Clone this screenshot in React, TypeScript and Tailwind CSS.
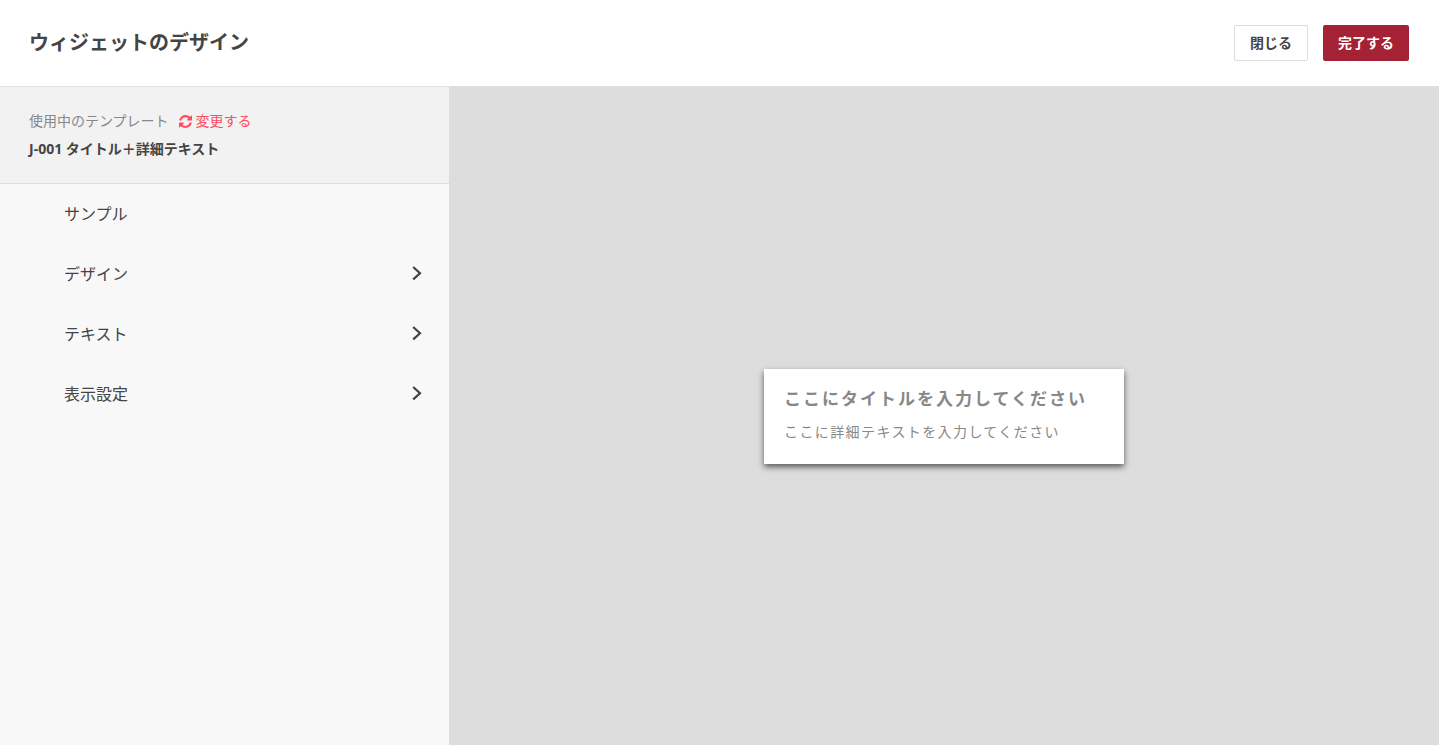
const menuItems = [
  { label: "サンプル", hasChildren: false },
  { label: "デザイン", hasChildren: true },
  { label: "テキスト", hasChildren: true },
  { label: "表示設定", hasChildren: true },
]

function RefreshIcon() {
  return (
    <svg width="13" height="13" viewBox="128 128 1536 1536" fill="currentColor" aria-hidden="true">
      <path d="M1639 1056q0 5-1 7-64 268-268 434.5t-478 166.5q-146 0-282.5-55t-243.5-157l-129 129q-19 19-45 19t-45-19-19-45v-448q0-26 19-45t45-19h448q26 0 45 19t19 45-19 45l-137 137q71 66 161 102t187 36q134 0 250-65t186-179q11-17 53-117 8-23 30-23h192q13 0 22.5 9.5t9.5 22.5zm25-800v448q0 26-19 45t-45 19h-448q-26 0-45-19t-19-45 19-45l138-138q-148-137-349-137-134 0-250 65t-186 179q-11 17-53 117-8 23-30 23h-199q-13 0-22.5-9.5t-9.5-22.5v-7q65-268 270-434.5t480-166.5q146 0 284 55.5t245 156.5l130-129q19-19 45-19t45 19 19 45z" />
    </svg>
  )
}

function Chevron() {
  return (
    <svg width="10" height="16" viewBox="0 0 10 16" fill="none" stroke="currentColor" strokeWidth="2.2" aria-hidden="true">
      <path d="M1.2 1L8 7.2L1.2 13.4" />
    </svg>
  )
}

function Header() {
  return (
    <header className="flex h-[87px] shrink-0 items-center justify-between border-b border-[#e0e0e0] bg-white px-[29px]">
      <h1 className="text-xl font-bold">ウィジェットのデザイン</h1>
      <div className="flex items-center gap-[15px] pr-px">
        <button className="h-9 rounded-[2px] border border-[#dddddd] bg-white px-[15px] text-sm font-bold">
          閉じる
        </button>
        <button className="h-9 rounded-[2px] bg-[#a52134] px-[15px] text-sm font-bold text-white">完了する</button>
      </div>
    </header>
  )
}

function Sidebar() {
  return (
    <aside className="w-[449px] shrink-0 bg-[#f8f8f8]">
      <div className="h-[97px] border-b border-[#dddddd] bg-[#f2f2f2] px-[29px] pt-5">
        <div className="flex items-center gap-2.5 text-sm leading-7">
          <span className="text-[#888888]">使用中のテンプレート</span>
          <a href="#template" className="flex items-center gap-1 text-[#ff4b5f]">
            <RefreshIcon />
            変更する
          </a>
        </div>
        <p className="text-sm leading-7 font-bold">J-001 タイトル＋詳細テキスト</p>
      </div>
      <nav>
        {menuItems.map((item) => (
          <button
            key={item.label}
            className="flex h-[60px] w-full items-center justify-between pr-[27px] pl-16 text-left text-base"
          >
            {item.label}
            {item.hasChildren && <Chevron />}
          </button>
        ))}
      </nav>
    </aside>
  )
}

function Preview() {
  return (
    <main className="flex flex-1 items-center justify-center bg-[#dddddd]">
      <section className="w-[360px] bg-white px-5 pt-4 pb-5 text-[#888888] shadow-[0_3px_6px_rgba(0,0,0,0.6)]">
        <h2 className="text-[17px] leading-7 font-bold tracking-[2px]">ここにタイトルを入力してください</h2>
        <p className="mt-[7px] text-sm leading-6 tracking-widest">ここに詳細テキストを入力してください</p>
      </section>
    </main>
  )
}

export default function App() {
  return (
    <div className="flex min-h-screen flex-col bg-white font-['Open_Sans','Noto_Sans_CJK_JP',sans-serif] text-[#444444]">
      <Header />
      <div className="flex flex-1">
        <Sidebar />
        <Preview />
      </div>
    </div>
  )
}
